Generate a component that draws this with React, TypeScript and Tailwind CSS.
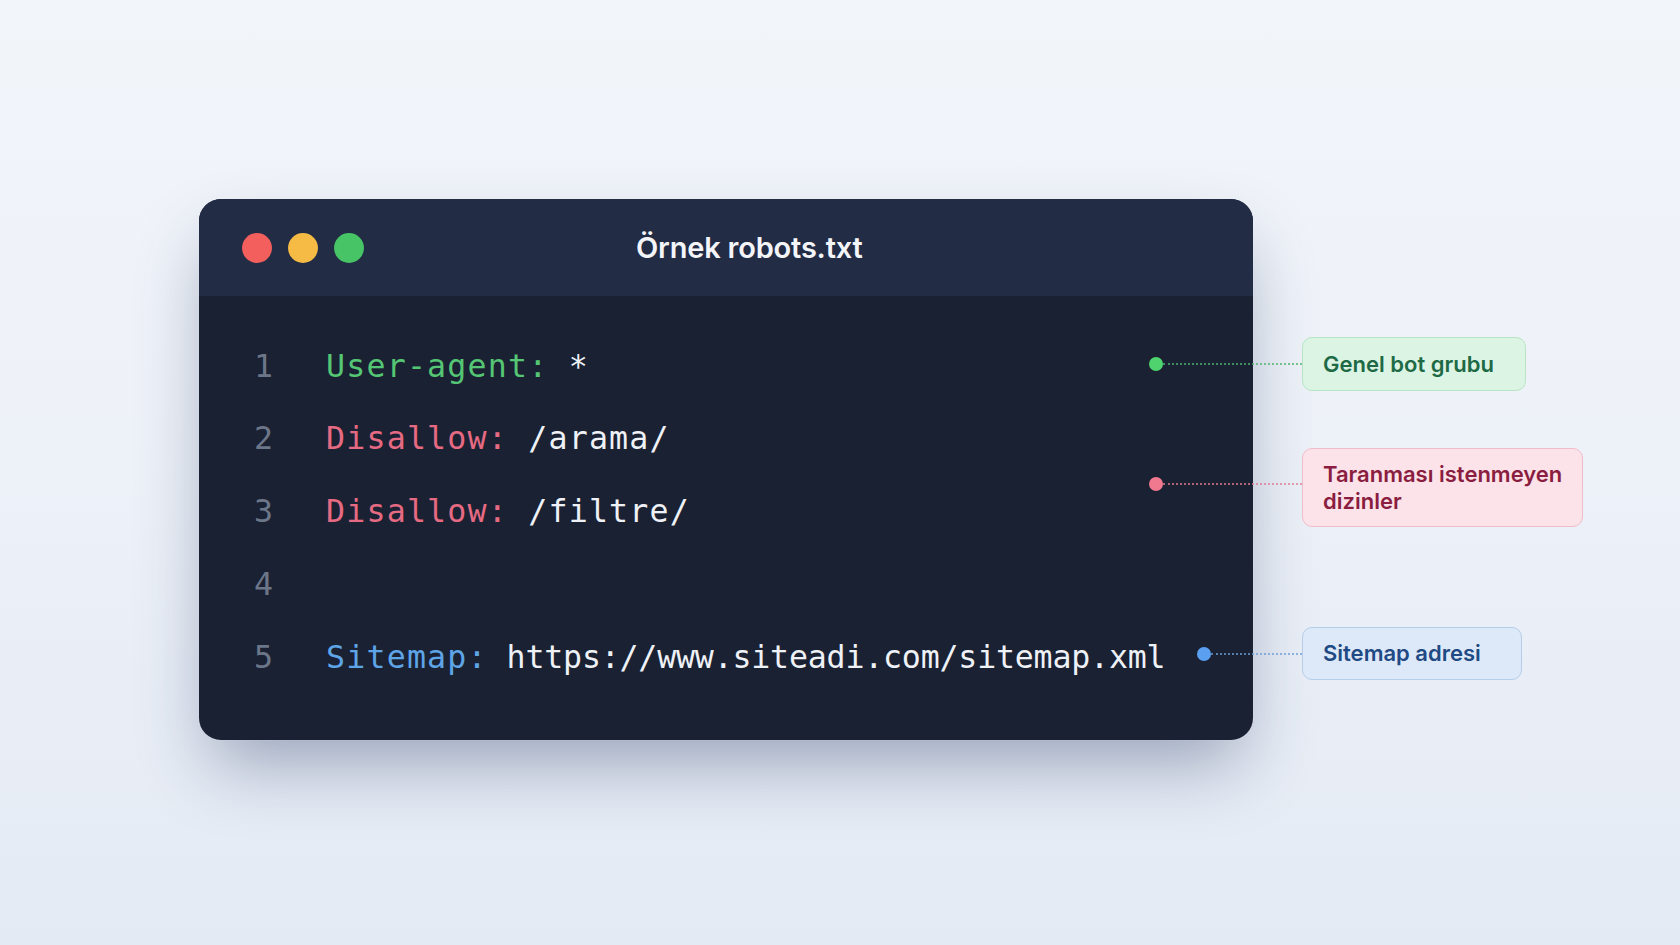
const mono = { fontFamily: '"DejaVu Sans Mono", "Liberation Mono", monospace' };

type Line = { n: number; key?: string; keyColor?: string; value?: string; tight?: boolean };

const lines: Line[] = [
  { n: 1, key: "User-agent:", keyColor: "text-[#55c674]", value: "*" },
  { n: 2, key: "Disallow:", keyColor: "text-[#e56a82]", value: "/arama/" },
  { n: 3, key: "Disallow:", keyColor: "text-[#e56a82]", value: "/filtre/" },
  { n: 4 },
  {
    n: 5,
    key: "Sitemap:",
    keyColor: "text-[#5ea5e8]",
    value: "https://www.siteadi.com/sitemap.xml",
    tight: true,
  },
];

export default function App() {
  return (
    <div
      className="h-[945px] w-full overflow-hidden bg-gradient-to-b from-[#f2f5fa] via-[#edf1f8] to-[#e4eaf4] pl-[199px] pt-[199px]"
      style={{ fontFamily: 'Inter, "Noto Sans", sans-serif' }}
    >
      {/* Window */}
      <div className="relative h-[541px] w-[1054px] rounded-[22px] bg-[#1a2133] shadow-[0_34px_70px_-12px_rgba(40,60,100,0.42)] ring-1 ring-white/5">
        {/* Title bar */}
        <div className="flex h-[97px] items-center rounded-t-[22px] bg-[#232c45] pl-[43px]">
          <div className="flex items-center gap-4">
            <span className="h-[30px] w-[30px] rounded-full bg-[#f25f5c]" />
            <span className="h-[30px] w-[30px] rounded-full bg-[#f6bb45]" />
            <span className="h-[30px] w-[30px] rounded-full bg-[#47c466]" />
          </div>
          <h1 className="ml-[272px] text-[29px] font-semibold tracking-[-0.2px] text-[#f3f5f9]">
            Örnek robots.txt
          </h1>
        </div>

        {/* Code */}
        <div className="pl-[55px] pt-[34px]" style={mono}>
          {lines.map((l) => (
            <div key={l.n} className="flex h-[72.75px] items-center text-[31.6px]">
              <span className="w-[72px] text-[#6c7689]">{l.n}</span>
              {l.key && (
                <>
                  <span className={`${l.keyColor} tracking-[1.2px]`}>{l.key}</span>
                  <span
                    className={`whitespace-pre text-[#eef1f6] ${
                      l.tight ? "tracking-[-0.2px]" : "tracking-[1.2px]"
                    }`}
                  >
                    {" "}
                    {l.value}
                  </span>
                </>
              )}
            </div>
          ))}
        </div>

        {/* Callouts */}
        <div className="absolute left-[950px] top-[138px] flex items-center">
          <span className="h-[14px] w-[14px] rounded-full bg-[#4fd36f]" />
          <span className="h-0 w-[139px] border-t-2 border-dotted border-[#4eb36f]/75" />
          <div className="flex h-[54px] w-[224px] items-center rounded-[10px] border-[1.5px] border-[#b7e5c4] bg-[#dcf4e3] pl-5 text-[22px] font-semibold text-[#1f6a46]">
            Genel bot grubu
          </div>
        </div>

        <div className="absolute left-[950px] top-[249px] flex items-center">
          <div className="mb-2 flex items-center">
            <span className="h-[14px] w-[14px] rounded-full bg-[#f0788f]" />
            <span className="h-0 w-[139px] border-t-2 border-dotted border-[#e07c93]/75" />
          </div>
          <div className="flex h-[79px] w-[281px] items-center rounded-[10px] border-[1.5px] border-[#f0bcc8] bg-[#fbe3e9] pl-5 text-[22px] font-semibold leading-[27px] text-[#8a1d40]">
            Taranması istenmeyen
            <br />
            dizinler
          </div>
        </div>

        <div className="absolute left-[998px] top-[428px] flex items-center">
          <span className="h-[14px] w-[14px] rounded-full bg-[#5a9ff0]" />
          <span className="h-0 w-[91px] border-t-2 border-dotted border-[#6b9fd8]/75" />
          <div className="flex h-[53px] w-[220px] items-center rounded-[10px] border-[1.5px] border-[#b5cdea] bg-[#dde9f8] pl-5 text-[22px] font-semibold text-[#1f4a84]">
            Sitemap adresi
          </div>
        </div>
      </div>
    </div>
  );
}
